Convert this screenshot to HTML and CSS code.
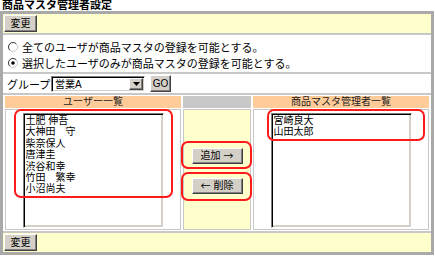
FILE: index.html
```html
<!DOCTYPE html>
<html lang="ja">
<head>
<meta charset="utf-8">
<title>商品マスタ管理者設定</title>
<link rel="stylesheet" href="styles.css">
</head>
<body>
<h1 class="title">商品マスタ管理者設定</h1>
<div class="panel">
  <div class="bar"><button class="btn btn-change">変更</button></div>
  <div class="options">
    <div class="radio-row">
      <svg class="radio" viewBox="0 0 10 10"><circle cx="5" cy="5" r="4.5" fill="#fff" stroke="#c8c8c8"/><path d="M1.8 8.2 A4.5 4.5 0 0 1 8.2 1.8" fill="none" stroke="#404040"/></svg>
      <span>全てのユーザが商品マスタの登録を可能とする。</span>
    </div>
    <div class="radio-row">
      <svg class="radio" viewBox="0 0 10 10"><circle cx="5" cy="5" r="4.5" fill="#fff" stroke="#c8c8c8"/><path d="M1.8 8.2 A4.5 4.5 0 0 1 8.2 1.8" fill="none" stroke="#404040"/><circle cx="5" cy="5" r="1.8" fill="#000"/></svg>
      <span>選択したユーザのみが商品マスタの登録を可能とする。</span>
    </div>
  </div>
  <div class="group-row">
    <span class="group-label">グループ</span>
    <div class="select">
      <span class="select-text">営業A</span>
      <span class="select-arrow"><svg viewBox="0 0 7 4" width="7" height="4"><path d="M0 0 H7 L3.5 4 Z" fill="#000"/></svg></span>
    </div>
    <button class="btn btn-go">GO</button>
  </div>
  <div class="cols">
    <div class="head">ユーザー一覧</div>
    <div class="head head-mid"></div>
    <div class="head">商品マスタ管理者一覧</div>
    <div class="cell cell-list">
      <ul class="listbox">
        <li>土肥 伸吾</li>
        <li>大神田　守</li>
        <li>柴奈保人</li>
        <li>唐津圭</li>
        <li>渋谷和幸</li>
        <li>竹田　繁幸</li>
        <li>小沼尚夫</li>
      </ul>
    </div>
    <div class="cell cell-mid">
      <button class="btn btn-move">追加 <span class="arrow">→</span></button>
      <button class="btn btn-move"><span class="arrow">←</span> 削除</button>
    </div>
    <div class="cell cell-list">
      <ul class="listbox">
        <li>宮崎良大</li>
        <li>山田太郎</li>
      </ul>
    </div>
  </div>
  <div class="bar"><button class="btn btn-change">変更</button></div>
</div>
<div class="mark mark-users"></div>
<div class="mark mark-admins"></div>
<div class="mark mark-add"></div>
<div class="mark mark-del"></div>
</body>
</html>
```
FILE: styles.css
```css
* { box-sizing: border-box; }
body {
  margin: 0;
  width: 435px;
  height: 256px;
  overflow: hidden;
  position: relative;
  background: #fff;
  color: #000;
  font-family: "Liberation Sans", "Noto Sans CJK JP", sans-serif;
  font-size: 11px;
}
.title {
  margin: 0;
  height: 11px;
  padding-left: 2px;
  font-size: 11px;
  line-height: 11px;
  font-weight: bold;
  white-space: nowrap;
}
.panel {
  width: 434px;
  height: 244px;
  border: 3px solid #a9a9a9;
  background: #c8c8c8;
  display: flex;
  flex-direction: column;
  gap: 2px;
}
.bar {
  height: 19px;
  flex: none;
  background: #ffffcc;
  padding: 1px;
  display: flex;
}
.btn {
  font-family: inherit;
  font-size: 10px;
  line-height: 1;
  margin: 0;
  padding: 0;
  color: #000;
  background: #d4d0c8;
  border: 1px solid;
  border-color: #fff #404040 #404040 #fff;
  box-shadow: inset -1px -1px 0 #808080;
  display: flex;
  align-items: center;
  justify-content: center;
  white-space: pre;
}
.arrow { font-family: "Noto Sans CJK JP", sans-serif; line-height: 1; }
.btn-change { width: 33px; height: 17px; }
.options {
  height: 37px;
  flex: none;
  background: #fff;
  padding: 4px 0 0 5px;
}
.radio-row {
  height: 16px;
  display: flex;
  align-items: center;
  gap: 4px;
  white-space: nowrap;
}
.radio { width: 10px; height: 10px; flex: none; }
.group-row {
  height: 19px;
  flex: none;
  background: #fff;
  display: flex;
  align-items: center;
  padding-left: 4px;
}
.group-label { width: 44px; flex: none; white-space: nowrap; }
.select {
  width: 94px;
  height: 16px;
  flex: none;
  display: flex;
  align-items: center;
  justify-content: space-between;
  background: #fff;
  border: 1px solid;
  border-color: #808080 #fff #fff #808080;
  box-shadow: inset 1px 1px 0 #000, inset -1px -1px 0 #d4d0c8;
  padding: 1px 1px 1px 3px;
  font-size: 10px;
}
.select-arrow {
  width: 14px;
  height: 12px;
  background: #d4d0c8;
  border: 1px solid;
  border-color: #fff #404040 #404040 #fff;
  box-shadow: inset -1px -1px 0 #808080;
  display: flex;
  align-items: center;
  justify-content: center;
}
.select-arrow svg { display: block; }
.btn-go { width: 21px; height: 17px; margin-left: 5px; }
.cols {
  height: 136px;
  flex: none;
  background: #fff;
  display: grid;
  grid-template-columns: 176px 68px 176px;
  grid-template-rows: 12px 121px;
  gap: 1px 2px;
  padding: 1px 2px;
}
.head {
  background: #ffcc99;
  font-size: 10px;
  line-height: 12px;
  text-align: center;
  white-space: nowrap;
  color: #222;
}
.head-mid { background: #c8c8c8; }
.cell { border: 1px solid #c8c8c8; }
.cell-list {
  background: #fff;
  padding-top: 3px;
  display: flex;
  justify-content: center;
  align-items: flex-start;
}
.listbox {
  width: 141px;
  height: 115px;
  margin: 0;
  padding: 1px 0 0 2px;
  list-style: none;
  background: #fff;
  border: 1px solid;
  border-color: #808080 #fff #fff #808080;
  box-shadow: inset 1px 1px 0 #000, inset -2px -2px 0 #d4d0c8;
  font-size: 10px;
  line-height: 11.4px;
  white-space: nowrap;
}
.cell-mid {
  background: #ffffcc;
  display: flex;
  flex-direction: column;
  align-items: center;
  padding-top: 38px;
  gap: 14px;
}
.btn-move { width: 51px; height: 16px; }
.mark {
  position: absolute;
  border: 2px solid #ff1a1a;
  border-radius: 7px;
}
.mark-users { left: 14px; top: 109px; width: 159px; height: 89px; }
.mark-admins { left: 267px; top: 109px; width: 158px; height: 32px; }
.mark-add { left: 181px; top: 141px; width: 71px; height: 28px; }
.mark-del { left: 181px; top: 172px; width: 71px; height: 29px; }
```
